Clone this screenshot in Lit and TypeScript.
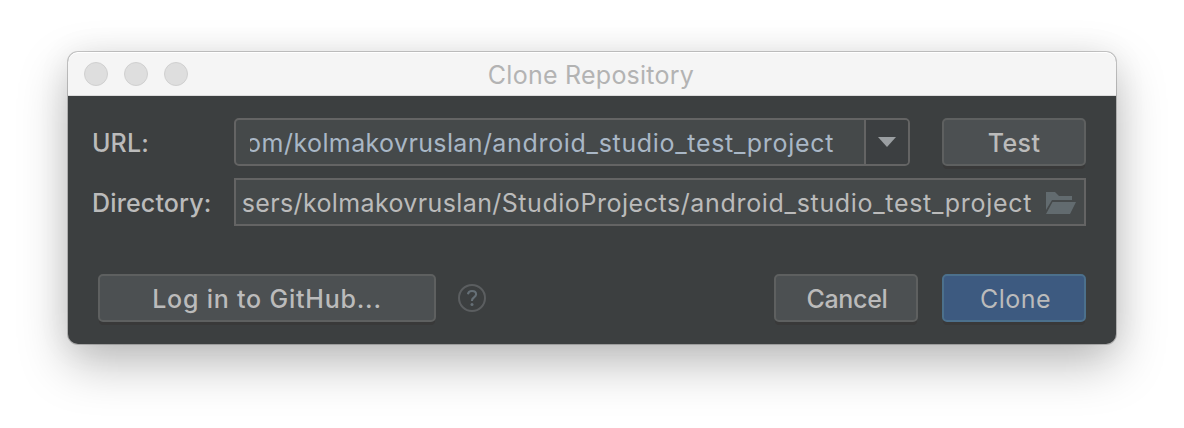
import { LitElement, html, css } from "lit";
import { customElement } from "lit/decorators.js";

@customElement("app-root")
export class AppRoot extends LitElement {
  static styles = css`
    :host {
      display: block;
      box-sizing: border-box;
      width: 1184px;
      height: 428px;
      padding: 52px 68px 84px;
      background: #fff;
      overflow: hidden;
      font-family: Inter, "Liberation Sans", sans-serif;
      font-size: 25px;
      line-height: 30px;
      color: #bbb;
      white-space: nowrap;
    }
    * { box-sizing: border-box; }
    .window {
      display: flex;
      flex-direction: column;
      height: 292px;
      border-radius: 10px;
      background: #3c3f40;
      box-shadow: 0 0 0 1px rgba(0, 0, 0, 0.2), 0 20px 50px rgba(0, 0, 0, 0.26), 0 2px 34px rgba(0, 0, 0, 0.07);
    }
    .titlebar {
      display: grid;
      grid-template-columns: 1fr auto 1fr;
      align-items: center;
      height: 44px;
      padding-left: 16px;
      padding-right: 18px;
      background: #f5f5f5;
      border-bottom: 1px solid #dcdcdc;
      border-radius: 10px 10px 0 0;
      box-shadow: inset 0 1px #fff;
      color: #b3b3b3;
    }
    .lights { display: flex; gap: 16px; }
    .light {
      width: 24px;
      height: 24px;
      border-radius: 50%;
      background: #dedede;
      border: 1px solid #d0d0d0;
    }
    .title { padding-top: 2px; letter-spacing: 0.25px; }
    .content { padding: 22px 30px 0 24px; }
    .row { display: flex; height: 48px; align-items: center; }
    .row + .row { margin-top: 12px; }
    .label { width: 142px; padding-top: 2px; font-weight: 500; }
    .l-url { letter-spacing: 0.1px; }
    .l-dir { letter-spacing: 0.15px; }
    .field {
      display: flex;
      align-items: center;
      height: 48px;
      background: #45494a;
      border: 2px solid #646464;
    }
    .combo { width: 676px; border-radius: 5px; margin-right: 32px; }
    .text { display: flex; justify-content: flex-end; overflow: hidden; padding-top: 3px; height: 34px; }
    .text span { letter-spacing: 0.55px; }
    .text .user { letter-spacing: 0.38px; }
    .text .project { letter-spacing: 0.68px; }
    .url { width: 584px; margin-left: 14px; color: #a9b7c6; }
    .dir { width: 790px; margin-left: 6px; }
    .text .home { letter-spacing: 0.35px; }
    .arrow {
      display: flex;
      align-items: center;
      justify-content: center;
      width: 44px;
      height: 44px;
      margin-left: auto;
      border-left: 2px solid #646464;
      border-radius: 0 3px 3px 0;
      background: #3c3f41;
    }
    .path { width: 852px; }
    .folder { margin-left: 13px; margin-top: 1px; }
    .button {
      display: flex;
      align-items: center;
      justify-content: center;
      width: 144px;
      height: 48px;
      padding-top: 2px;
      font-weight: 500;
      background: #4c5052;
      border: 2px solid #5e6060;
      border-radius: 5px;
      box-shadow: 0 4px 0 -1px #393939;
    }
    .test { letter-spacing: 0.4px; }
    .actions { display: flex; align-items: center; margin-top: 48px; padding-left: 6px; }
    .login { width: 338px; letter-spacing: 0.78px; }
    .help { margin-left: 22px; margin-right: auto; }
    .cancel { margin-right: 24px; letter-spacing: -0.3px; padding-left: 2px; }
    .primary { font-weight: 400; background: #3d5a80; border-color: #4c708c; letter-spacing: 0.5px; padding-left: 3px; }
    svg { display: block; flex: none; }
  `;

  render() {
    return html`
      <div class="window">
        <div class="titlebar">
          <div class="lights"><i class="light"></i><i class="light"></i><i class="light"></i></div>
          <div class="title">Clone Repository</div>
        </div>
        <div class="content">
          <div class="row">
            <div class="label l-url">URL:</div>
            <div class="field combo">
              <div class="text url"><span>om/</span><span class="user">kolmakovruslan/</span><span class="project">android_studio_test_project</span></div>
              <div class="arrow">
                <svg width="18" height="10" viewBox="0 0 18 10"><path d="M0 0H18L9 10Z" fill="#9b9fa2"/></svg>
              </div>
            </div>
            <div class="button test"><span>Test</span></div>
          </div>
          <div class="row">
            <div class="label l-dir">Directory:</div>
            <div class="field path">
              <div class="text dir"><span class="home">sers/</span><span class="user">kolmakovruslan/</span><span>StudioProjects/</span><span class="project">android_studio_test_project</span></div>
              <svg class="folder" width="32" height="24" viewBox="0 0 32 24">
                <path d="M1 1H10L14 5H27V9H7L1 19ZM7.5 11H31L25 23H1Z" fill="#626b6f"/>
              </svg>
            </div>
          </div>
          <div class="actions">
            <div class="button login"><span>Log in to GitHub...</span></div>
            <svg class="help" width="28" height="28" viewBox="0 0 28 28" fill="none">
              <circle cx="14" cy="14" r="13" stroke="#5b5e60" stroke-width="2"/>
              <path d="M9.9 10.2C10.3 8 11.8 7 14 7C16.6 7 18.1 8.4 18.1 10.3C18.1 13.3 14 13.3 14 16.3V17" stroke="#667077" stroke-width="2.1"/>
              <circle cx="14" cy="20.5" r="1.5" fill="#667077"/>
            </svg>
            <div class="button cancel"><span>Cancel</span></div>
            <div class="button primary"><span>Clone</span></div>
          </div>
        </div>
      </div>
    `;
  }
}
